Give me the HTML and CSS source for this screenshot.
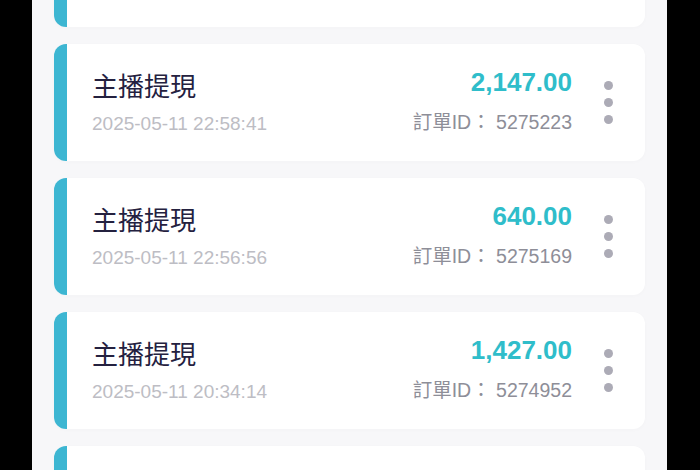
FILE: index.html
```html
<!DOCTYPE html>
<html lang="zh-Hant">
<head>
  <meta charset="UTF-8">
  <meta name="viewport" content="width=device-width, initial-scale=1">
  <title>提現記錄</title>
  <link rel="stylesheet" href="styles.css">
</head>
<body>

<div class="screen">
  <div class="record-list">

    <div class="record">
      <div class="record-main">
        <div class="record-title">主播提現</div>
        <div class="record-time">2025-05-11 23:02:10</div>
      </div>
      <div class="record-side">
        <div class="record-amount">860.00</div>
        <div class="record-order">訂單ID： 5275301</div>
      </div>
      <div class="more"><span></span><span></span><span></span></div>
    </div>

    <div class="record">
      <div class="record-main">
        <div class="record-title">主播提現</div>
        <div class="record-time">2025-05-11 22:58:41</div>
      </div>
      <div class="record-side">
        <div class="record-amount">2,147.00</div>
        <div class="record-order">訂單ID： 5275223</div>
      </div>
      <div class="more"><span></span><span></span><span></span></div>
    </div>

    <div class="record">
      <div class="record-main">
        <div class="record-title">主播提現</div>
        <div class="record-time">2025-05-11 22:56:56</div>
      </div>
      <div class="record-side">
        <div class="record-amount">640.00</div>
        <div class="record-order">訂單ID： 5275169</div>
      </div>
      <div class="more"><span></span><span></span><span></span></div>
    </div>

    <div class="record">
      <div class="record-main">
        <div class="record-title">主播提現</div>
        <div class="record-time">2025-05-11 20:34:14</div>
      </div>
      <div class="record-side">
        <div class="record-amount">1,427.00</div>
        <div class="record-order">訂單ID： 5274952</div>
      </div>
      <div class="more"><span></span><span></span><span></span></div>
    </div>

    <div class="record">
      <div class="record-main">
        <div class="record-title">主播提現</div>
        <div class="record-time">2025-05-11 19:12:37</div>
      </div>
      <div class="record-side">
        <div class="record-amount">980.00</div>
        <div class="record-order">訂單ID： 5274810</div>
      </div>
      <div class="more"><span></span><span></span><span></span></div>
    </div>

  </div>
</div>

</body>
</html>
```

FILE: styles.css
```css
html, body {
  margin: 0;
  padding: 0;
  height: 100%;
  overflow: hidden;
}
body {
  background-color: #000;
  font-family: "Liberation Sans", "Noto Sans CJK TC", sans-serif;
}
.screen {
  margin: 0 33px 0 32px;
  height: 100%;
  background-color: #f7f7f9;
  overflow: hidden;
}
.record-list {
  display: flex;
  flex-direction: column;
  gap: 17px;
  padding: 0 22px;
  margin-top: -90px;
}
.record {
  display: flex;
  align-items: center;
  height: 117px;
  box-sizing: border-box;
  background: #fff;
  border-left: 13px solid #3db6d2;
  border-radius: 12px;
  padding: 0 32px 0 25px;
  box-shadow: 0 1px 4px rgba(0,0,0,0.02);
}
.record-main {
  flex: 1;
  margin-top: -1px;
}
.record-title {
  font-size: 26px;
  line-height: 32px;
  color: #24213f;
  font-family: "Noto Sans CJK TC", sans-serif;
}
.record-time {
  margin-top: 11px;
  font-size: 19px;
  line-height: 24px;
  color: #bdbdc4;
}
.record-side {
  text-align: right;
  margin-top: -4px;
}
.record-amount {
  font-size: 26px;
  line-height: 30px;
  font-weight: bold;
  color: #2fbdca;
}
.record-order {
  margin-top: 13px;
  font-size: 19.5px;
  line-height: 24px;
  color: #8e8e98;
}
.more {
  display: flex;
  flex-direction: column;
  gap: 8px;
  margin-left: 32px;
}
.more span {
  width: 9px;
  height: 9px;
  border-radius: 50%;
  background: #acabb6;
}
```
